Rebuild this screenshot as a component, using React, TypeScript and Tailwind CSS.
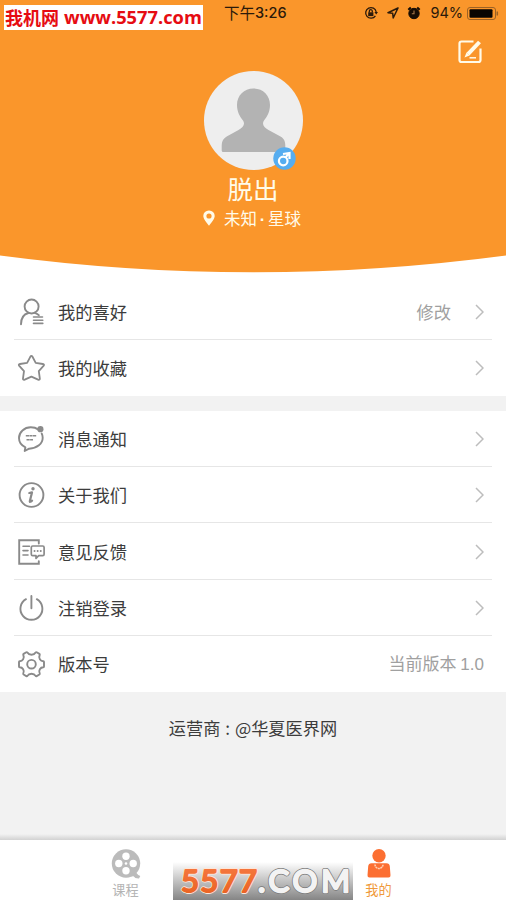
import React from "react";

type RowProps = {
  icon: React.ReactNode;
  label: string;
  value?: React.ReactNode;
  arrow?: boolean;
  last?: boolean;
};

function Icon({ children }: { children: React.ReactNode }) {
  return (
    <svg
      className="h-7 w-7 shrink-0"
      viewBox="0 0 28 28"
      fill="none"
      stroke="#8a8a8a"
      strokeWidth="1.9"
      strokeLinecap="round"
      strokeLinejoin="round"
    >
      {children}
    </svg>
  );
}

const HobbyIcon = () => (
  <Icon>
    <circle cx="14.600" cy="8.500" r="7" />
    <path d="M4 26.200c0-6 3-10 7.400-11.200M17.800 14.800c1.600.6 3 1.300 4 2.400" />
    <path d="M16.500 19h9M16.500 22.200h9.300M16.500 25.400h9.300" strokeWidth="1.600" />
  </Icon>
);

const StarIcon = () => (
  <Icon>
    <path
      d="M13.300 2.800q1.100-2 2.200 0l3.200 6 7.100 1.200q1.900.4.700 1.900l-4.700 5.200 1 7.200q.2 2-1.700 1.300l-6.700-3-6.700 3q-1.900.7-1.700-1.300l1-7.200-4.700-5.200q-1.200-1.500.7-1.900l7.100-1.200z"
      strokeWidth="1.800"
    />
  </Icon>
);

const MessageIcon = () => (
  <Icon>
    <path d="M21.500 4.600C19 2.900 16.500 2.300 13.800 2.300 7.300 2.300 2 7.100 2 13c0 4 2.400 7.400 6.400 9.300l-.7 3.700 4.400-2.300c8-.3 13.600-5 13.600-11 0-1.600-.4-3-1-4.200" />
    <circle cx="23.400" cy="4.200" r="3.100" fill="#8a8a8a" stroke="none" />
    <path d="M8.800 10.800h10.500M9.500 14.700h6.500" strokeWidth="1.500" strokeDasharray="3.200 .4" strokeLinecap="butt" />
  </Icon>
);

const InfoIcon = () => (
  <Icon>
    <circle cx="14.500" cy="14" r="11.900" />
    <circle cx="16" cy="7.700" r="1.700" fill="#8a8a8a" stroke="none" />
    <path d="M12.300 12l2.700-.6-2.200 8.800q-.2 1.500 2.300-.6" strokeWidth="2.200" />
  </Icon>
);

const FeedbackIcon = () => (
  <Icon>
    <path d="M21.800 5.500V2.200H2.200v23.600h19.600v-2.600" strokeLinejoin="miter" />
    <path d="M6 8.300h6.500M6 12.600h5M6 17h5" strokeWidth="1.600" />
    <path
      d="M15.700 8h10q1.400 0 1.400 1.400v6.800q0 1.400-1.400 1.400h-4l-2.700 2.800v-2.800h-3.300q-1.400 0-1.400-1.400V9.400Q14.300 8 15.700 8z"
      strokeWidth="1.700"
    />
    <path d="M17.500 13h.1M20.600 13h.1M23.700 13h.1" />
  </Icon>
);

const PowerIcon = () => (
  <Icon>
    <path d="M14.400 2v12.300M9 5.200a11 11 0 1 0 10.800 0" />
  </Icon>
);

const GearIcon = () => (
  <Icon>
    <circle cx="14.500" cy="14.200" r="4.300" />
    <path d="M10.400 2.500C12 5.400 17 5.400 18.600 2.500Q19 2 19.700 2.300L22.400 3.900Q23 4.300 22.700 5C21.200 8 23.400 11.200 26.300 11.200Q27 11.300 27 12V16.400Q27 17.100 26.300 17.200C23.400 17.200 21.200 20.400 22.700 23.400Q23 24.100 22.400 24.500L19.700 26.100Q19 26.400 18.600 25.900C17 23 12 23 10.400 25.900Q10 26.400 9.300 26.100L6.600 24.500Q6 24.100 6.300 23.400C7.800 20.400 5.600 17.200 2.700 17.200Q2 17.100 2 16.400V12Q2 11.300 2.700 11.200C5.600 11.200 7.800 8 6.300 5Q6 4.300 6.600 3.900L9.300 2.300Q10 2 10.400 2.500Z" />
  </Icon>
);

function Row({ icon, label, value, arrow = true, last }: RowProps) {
  return (
    <div className="mx-3.5 flex h-[56.25px] items-center border-b border-[#e6e6e6] pt-px pr-2 pl-[3px] last:border-0 last:pt-0">
      {icon}
      <span className="ml-[13px] text-[17.25px] text-[#3c3c3c]">{label}</span>
      <span className={last ? "ml-auto text-[17px] text-[#a0a0a0]" : "ml-auto pr-6 text-[17.25px] text-[#a0a0a0]"}>
        {value}
      </span>
      {arrow && (
        <svg className="h-4 w-[9px]" viewBox="0 0 9 16" fill="none" stroke="#bdbdbd" strokeWidth="1.5">
          <path d="M1 1l7 7-7 7" />
        </svg>
      )}
    </div>
  );
}

function StatusBar() {
  return (
    <div className="flex h-[26px] items-center pr-[7px] text-[#2b1a0a]">
      <div className="ml-[224px] flex items-center leading-none whitespace-nowrap">
        <span className="text-[15.5px]">下午</span>
        <span className="font-['Inter'] text-[14.5px] font-medium">3:26</span>
      </div>
      <div className="ml-auto flex items-center">
        <svg className="mr-px h-3.5 w-3.5" viewBox="0 0 14 14" fill="none" stroke="#2b1a0a" strokeWidth="1.3">
          <path d="M11.400 9.800A5.300 5.300 0 1 1 12.200 6" />
          <path d="M10.400 6h3.600l-1.800 2.500z" fill="#2b1a0a" stroke="none" />
          <rect x="4.200" y="6.300" width="5.200" height="3.800" fill="#2b1a0a" stroke="none" />
          <path d="M5.300 6.500V5.200a1.500 1.500 0 0 1 3 0v1.300" />
        </svg>
        <svg className="ml-2 h-3 w-3" viewBox="0 0 12 12" fill="none" stroke="#2b1a0a" strokeWidth="1.5" strokeLinejoin="round">
          <path d="M11 1L1 5.800l4.700.5.500 4.700z" />
        </svg>
        <svg className="ml-2 h-3.5 w-3.5" viewBox="0 0 14 14" fill="none" stroke="#160d05">
          <circle cx="7" cy="7.500" r="5.200" fill="#160d05" />
          <path d="M1.300 3.800l2.500-2.300M10.200 1.500l2.500 2.300" strokeWidth="2" />
          <path d="M7 4.500v3.200H4.800" stroke="#a9794a" strokeWidth="1.100" />
        </svg>
        <span className="ml-[9px] font-['Inter'] text-[14.5px] leading-none">94%</span>
        <svg className="ml-1 h-[13px] w-[32px]" viewBox="0 0 32 13">
          <rect x=".5" y=".5" width="28" height="12" rx="2.500" fill="none" stroke="#9c6225" />
          <rect x="2.500" y="2.300" width="23" height="8.400" rx="1" fill="#090502" />
          <path d="M30.300 4.500v4" stroke="#9c6225" strokeWidth="1.500" />
        </svg>
      </div>
    </div>
  );
}

function Header() {
  return (
    <header className="relative h-[283.7px] shrink-0 bg-white">
      <svg className="absolute inset-0 h-[273px] w-full" viewBox="0 0 506 273" preserveAspectRatio="none">
        <path d="M0 0H506V255.500Q379 272.300 253 272.300T0 255.500Z" fill="#fa962b" />
      </svg>
      <div className="relative">
        <StatusBar />
        <div className="absolute top-[5px] left-1 flex h-[25px] w-[199px] items-center bg-white pb-px pl-px font-bold whitespace-nowrap text-[#e60c12]">
          <span className="text-[18px]">我机网</span>
          <span className="ml-[5px] font-['Open_Sans'] text-[18.3px]">www.5577.com</span>
        </div>
        <svg className="absolute top-10 right-6 h-6 w-6" viewBox="0 0 24 24" fill="none" stroke="#fffbe9" strokeWidth="2.2">
          <path d="M15.500 1.500h-12Q1.500 1.500 1.500 3.500v16.500q0 2 2 2h17q2 0 2-2V8.500" />
          <path d="M21.500 2L10 14.200" strokeWidth="4" />
          <path d="M8.500 12.500L6.500 17.500l5-2z" fill="#fffbe9" stroke="none" />
          <path d="M11.500 17.800h6.500" strokeWidth="1.500" />
        </svg>
        <div className="flex flex-col items-center pt-[45px]">
          <div className="relative">
            <svg className="h-[99px] w-[99px]" viewBox="0 0 99 99">
              <circle cx="49.500" cy="49.500" r="49.500" fill="#eeeeee" />
              <path
                d="M49.500 17.500c9.500 0 16.500 7 16.500 16.500 0 7-3 11.500-6 15.500-2.500 4 0 7 4.500 9.500l12 6.500c4 2.300 5 5.500 4.800 10.500v3.500q0 1.500-1.500 1.500H19.200q-1.500 0-1.500-1.500V76c0-5 1-8.200 5-10.500l11.800-6.500c4.500-2.500 7-5.500 4.500-9.500-3-4-6-8.500-6-15.500 0-9.500 7-16.500 16.500-16.500z"
                fill="#b3b3b3"
              />
            </svg>
            <svg className="absolute right-[7px] bottom-0 h-[23px] w-[23px]" viewBox="0 0 23 23" fill="none" stroke="#fff" strokeWidth="2.200">
              <circle cx="11.500" cy="11.500" r="11.200" fill="#56adf0" stroke="none" />
              <circle cx="10.200" cy="14" r="4.300" />
              <path d="M12.500 10.700l3-4M10 7l6.500-1v6" />
            </svg>
          </div>
          <h1 className="mt-px text-[25.5px] leading-[33px] font-normal text-[#fffbe9]">脱出</h1>
          <div className="mt-[2px] mr-[2px] flex items-center text-[#fffbe9]">
            <svg className="mr-[9px] h-4 w-3" viewBox="0 0 12 16">
              <path
                fillRule="evenodd"
                d="M6 .5A5.500 5.500 0 0 1 11.700 6.100C11.700 9 8.500 12.500 6 15.700 3.500 12.500.3 9 .3 6.100A5.500 5.500 0 0 1 6 .5ZM6 3.400A2.600 2.600 0 1 0 6 8.600 2.600 2.600 0 1 0 6 3.400Z"
                fill="#fffbe9"
              />
            </svg>
            <span className="text-[16.5px] leading-6">
              未知<span className="inline-block w-[11px] text-center font-['Liberation_Sans'] leading-none font-bold">·</span>星球
            </span>
          </div>
        </div>
      </div>
    </header>
  );
}

function TabBar() {
  return (
    <nav className="relative flex h-[60px] shrink-0 bg-white">
      <div className="flex w-1/2 flex-col items-center pt-[9px] pr-[2px] text-[#b4b4b4]">
        <svg className="h-[30px] w-[30px]" viewBox="0 0 30 30">
          <circle cx="15" cy="14.500" r="14.200" fill="#bbbbbb" />
          <path d="M19 27.500q4-1.500 6-4 2 2.800 4.300 3.500l-1.300 2.500q-4 .2-5.500-2.200z" fill="#bbbbbb" />
          <g fill="#fff">
            <circle cx="15" cy="7.300" r="3.700" />
            <circle cx="7.800" cy="14.500" r="3.700" />
            <circle cx="22.200" cy="14.500" r="3.700" />
            <circle cx="15" cy="21.700" r="3.700" />
            <circle cx="15" cy="14.500" r="1.300" />
          </g>
        </svg>
        <span className="mt-[3px] text-[13.2px] leading-4">课程</span>
      </div>
      <div className="flex w-1/2 flex-col items-center pt-[9px] pr-[2px] text-[#f09a3c]">
        <svg className="h-[30px] w-6" viewBox="0 0 24 30">
          <circle cx="12" cy="6.700" r="6.700" fill="#fc6f32" />
          <path d="M4.500 14.300h15q3 0 3.300 3l.7 8.900q.2 2.300-2 2.300h-19q-2.200 0-2-2.300l.7-8.900q.3-3 3.300-3z" fill="#fc6f32" />
          <path d="M8 15.500a4 4 0 0 0 8 0" fill="none" stroke="#ffd2b5" strokeWidth="1.500" strokeDasharray="2 .5" />
        </svg>
        <span className="mt-[3px] text-[13.2px] leading-4">我的</span>
      </div>
      <svg className="absolute bottom-0 left-[173px] h-[38px] w-[180px] overflow-visible" viewBox="0 0 180 38">
        <defs>
          <linearGradient id="plate" x1="0" y1="0" x2="0" y2="1">
            <stop offset="0" stopColor="#fff" />
            <stop offset="1" stopColor="#858585" />
          </linearGradient>
          <linearGradient id="digits" x1="0" y1="0" x2="0" y2="1">
            <stop offset="0" stopColor="#f87c45" />
            <stop offset="1" stopColor="#e8601f" />
          </linearGradient>
        </defs>
        <rect width="180" height="38" fill="url(#plate)" />
        <g fontFamily="Lato" fontWeight="400" fontSize="31" strokeLinejoin="round" strokeLinecap="round">
          <text x="8" y="29.500" textLength="76" fill="#ffe6d8" stroke="#ffe6d8" strokeWidth="3.800">5577</text>
          <text x="8" y="29.500" textLength="76" fill="url(#digits)" stroke="url(#digits)" strokeWidth="2.200">5577</text>
          <text x="85" y="29.500" textLength="92" fill="#777" stroke="#777" strokeWidth="3.800">.COM</text>
          <text x="85" y="29.500" textLength="92" fill="#f3f3f3" stroke="#f3f3f3" strokeWidth="2.400">.COM</text>
        </g>
      </svg>
    </nav>
  );
}

export default function App() {
  return (
    <div className="flex h-[900px] w-[506px] flex-col overflow-hidden bg-[#f2f2f2] font-['Noto_Sans_CJK_SC',sans-serif]">
      <Header />
      <section className="bg-white">
        <Row icon={<HobbyIcon />} label="我的喜好" value="修改" />
        <Row icon={<StarIcon />} label="我的收藏" />
      </section>
      <section className="mt-[14.8px] bg-white">
        <Row icon={<MessageIcon />} label="消息通知" />
        <Row icon={<InfoIcon />} label="关于我们" />
        <Row icon={<FeedbackIcon />} label="意见反馈" />
        <Row icon={<PowerIcon />} label="注销登录" />
        <Row
          icon={<GearIcon />}
          label="版本号"
          value={<>当前版本 <span className="font-['Liberation_Sans']">1.0</span></>}
          arrow={false}
          last
        />
      </section>
      <footer className="flex-1 pt-[23px] text-center text-[17.2px] leading-[26px] text-[#3c3c3c]">
        运营商<span className="mx-px"> : </span>@华夏医界网
      </footer>
      <div className="h-1.5 bg-linear-to-b from-[#f2f2f2] to-[#d2d2d2]" />
      <TabBar />
    </div>
  );
}
